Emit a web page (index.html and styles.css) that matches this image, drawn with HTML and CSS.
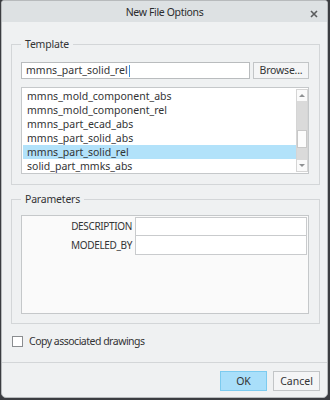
FILE: index.html
```html
<!DOCTYPE html>
<html lang="en">
<head>
    <meta charset="UTF-8">
    <title>New File Options</title>
    <link rel="stylesheet" href="styles.css">
</head>
<body>
    <div class="window">
        <!-- title bar -->
        <div class="titlebar">
            <span class="title">New File Options</span>
            <svg class="close" width="8" height="8" viewBox="0 0 8 8">
                <path d="M1 1L7 7M7 1L1 7" stroke="#5a5c5e" stroke-width="1.6" fill="none"/>
            </svg>
        </div>

        <div class="content">
            <fieldset class="group template">
                <legend>Template</legend>
                <div class="name-row">
                    <div class="text-field">mmns_part_solid_rel<span class="caret"></span></div>
                    <button class="btn browse">Browse...</button>
                </div>
                <div class="listbox">
                    <ul class="items">
                        <li>mmns_mold_component_abs</li>
                        <li>mmns_mold_component_rel</li>
                        <li>mmns_part_ecad_abs</li>
                        <li>mmns_part_solid_abs</li>
                        <li class="selected">mmns_part_solid_rel</li>
                        <li>solid_part_mmks_abs</li>
                    </ul>
                    <div class="scrollbar">
                        <div class="arrow up"><span></span></div>
                        <div class="track top"></div>
                        <div class="thumb"></div>
                        <div class="track bottom"></div>
                        <div class="arrow down"><span></span></div>
                    </div>
                </div>
            </fieldset>

            <fieldset class="group params">
                <legend>Parameters</legend>
                <div class="param-table">
                    <div class="param-row">
                        <span class="param-name">DESCRIPTION</span>
                        <div class="param-value"></div>
                    </div>
                    <div class="param-row">
                        <span class="param-name">MODELED_BY</span>
                        <div class="param-value"></div>
                    </div>
                </div>
            </fieldset>

            <label class="check-row">
                <span class="checkbox"></span>
                Copy associated drawings
            </label>
        </div>

        <div class="footer">
            <button class="btn ok">OK</button>
            <button class="btn">Cancel</button>
        </div>
    </div>
</body>
</html>
```

FILE: styles.css
```css
* {
    margin: 0;
    padding: 0;
    box-sizing: border-box;
}

body {
    width: 330px;
    height: 400px;
    background: #3b3d41;
    font-family: "Noto Sans", "Open Sans", sans-serif;
    font-size: 10.5px;
    color: #333435;
    overflow: hidden;
}

.window {
    margin-left: 1px;
    width: 327px;
    height: 398px;
    background: #eff1f2;
    border: 1px solid #b7babc;
    border-radius: 3px 3px 5px 5px;
    display: flex;
    flex-direction: column;
    overflow: hidden;
}

/* title bar */
.titlebar {
    height: 21px;
    background: #dde1e3;
    display: flex;
    align-items: center;
    justify-content: center;
    position: relative;
    flex-shrink: 0;
}

.title {
    font-size: 10.5px;
    letter-spacing: -0.35px;
    color: #2b2c2d;
    padding-top: 1px;
}

.close {
    position: absolute;
    right: 9px;
    top: 9px;
}

.content {
    flex: 1;
    padding: 15px 7px 0 9px;
}

/* group boxes */
.group {
    border: 1px solid #d3d6d8;
    padding: 0 10px 10px 9px;
    min-width: 0;
}

.group legend {
    padding: 0 4px;
    line-height: 14px;
    font-size: 10.5px;
    letter-spacing: -0.2px;
}

.template {
    padding-top: 11px;
}

.name-row {
    display: flex;
    gap: 3px;
    height: 17px;
}

.text-field {
    flex: 1;
    background: #fff;
    border: 1px solid #b9bcbe;
    line-height: 15px;
    padding-left: 4px;
    display: flex;
    align-items: center;
}

.caret {
    width: 1px;
    height: 12px;
    background: #3d8fd6;
    margin-left: 1px;
}

.btn {
    font-family: inherit;
    font-size: 10.5px;
    color: #333435;
    background: #f4f5f6;
    border: 1px solid #c2c5c7;
    height: 20px;
    cursor: pointer;
}

.browse {
    width: 56px;
    height: 17px;
    line-height: 13px;
    letter-spacing: -0.2px;
}

.listbox {
    margin-top: 8px;
    height: 87px;
    background: #fff;
    border: 1px solid #c5c8ca;
    display: flex;
    padding: 1px 0 0 1px;
}

.items {
    list-style: none;
    flex: 1;
}

.items li {
    height: 14px;
    line-height: 14px;
    padding-left: 4px;
}

.items li.selected {
    background: #b2e2fa;
}

.scrollbar {
    width: 12px;
    margin: 0 0 1px 0;
    border: 1px solid #d5d5d5;
    display: flex;
    flex-direction: column;
}

.arrow {
    height: 11px;
    background: #fafafa;
    display: flex;
    align-items: center;
    justify-content: center;
}

.arrow span {
    width: 0;
    height: 0;
    border-left: 3px solid transparent;
    border-right: 3px solid transparent;
}

.arrow.up span {
    border-bottom: 3px solid #8f9193;
}

.arrow.down span {
    border-top: 3px solid #8f9193;
}

.arrow.down {
    margin-top: auto;
}

.track {
    background: #dadada;
}

.track.top {
    height: 29px;
}

.track.bottom {
    height: 12px;
}

.thumb {
    height: 18px;
    background: #fcfcfc;
    border: 1px solid #c8c8c8;
}

/* parameters */
.params {
    margin-top: 7px;
    padding-top: 9px;
    padding-bottom: 9px;
}

.param-table {
    height: 99px;
    background: #fafafa;
    border: 1px solid #c5c8ca;
    padding: 1px 0 0 0;
}

.param-row {
    display: flex;
    height: 19px;
}

.param-name {
    width: 113px;
    text-align: right;
    padding-right: 3px;
    line-height: 19px;
    font-size: 10px;
    letter-spacing: -0.35px;
}

.param-value {
    flex: 1;
    background: #fff;
    border: 1px solid #c9cbcd;
    margin-right: 1px;
}

.param-row + .param-row .param-value {
    border-top: none;
}

/* checkbox */
.check-row {
    display: flex;
    align-items: center;
    gap: 6px;
    margin-top: 11px;
    padding-left: 1px;
    height: 12px;
    letter-spacing: -0.5px;
}

.checkbox {
    width: 11px;
    height: 11px;
    background: #fff;
    border: 1px solid #8a8d90;
}

/* footer */
.footer {
    flex-shrink: 0;
    border-top: 1px solid #d3d6d8;
    padding: 8px 7px 6px 0;
    display: flex;
    justify-content: flex-end;
    gap: 6px;
}

.footer .btn {
    width: 47px;
}

.footer .ok {
    background: #a9dffa;
    border-color: #7ccbef;
}
```
